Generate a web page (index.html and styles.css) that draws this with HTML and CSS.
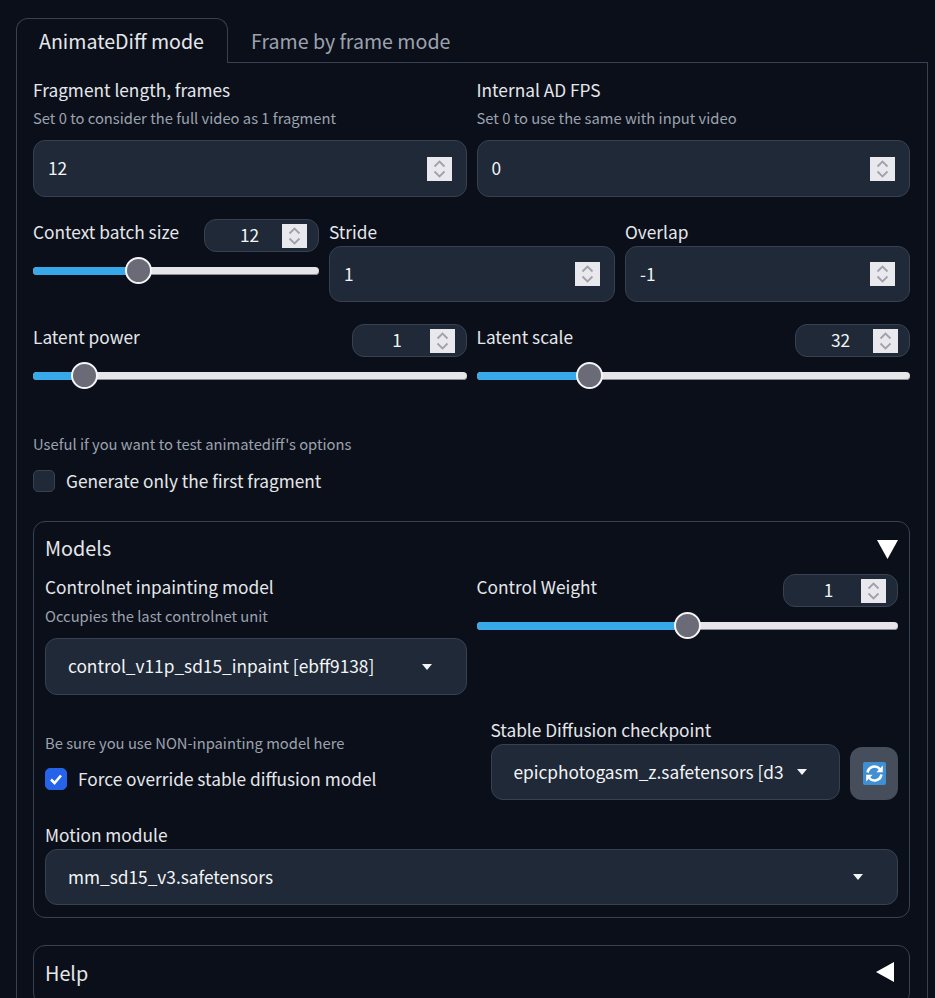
FILE: index.html
```html
<!DOCTYPE html>
<html>

<head>
    <meta charset="UTF-8">
    <meta name="viewport" content="width=device-width, initial-scale=1.0">
    <title>AnimateDiff</title>
    <link rel="stylesheet" href="styles.css">
</head>

<body>
    <svg class="defs">
        <symbol id="spin" viewBox="0 0 25 24">
            <path d="M7.5 9.5 12.5 4.5 17.5 9.5M7.5 14.5 12.5 19.5 17.5 14.5" fill="none" stroke="#a3a0ad" stroke-width="1.8"/>
        </symbol>
    </svg>

    <div class="tabs">
        <div class="tab active">AnimateDiff mode</div>
        <div class="tab">Frame by frame mode</div>
    </div>

    <div class="panel">
        <div class="row two first-row">
            <div>
                <div class="label">Fragment length, frames</div>
                <div class="info">Set 0 to consider the full video as 1 fragment</div>
                <div class="input"><span class="val">12</span><span class="spin"><svg><use href="#spin"/></svg></span></div>
            </div>
            <div>
                <div class="label">Internal AD FPS</div>
                <div class="info">Set 0 to use the same with input video</div>
                <div class="input"><span class="val">0</span><span class="spin"><svg><use href="#spin"/></svg></span></div>
            </div>
        </div>

        <div class="row three">
            <div>
                <div class="slider-head">
                    <div class="label">Context batch size</div>
                    <div class="mini"><span class="val">12</span><span class="spin"><svg><use href="#spin"/></svg></span></div>
                </div>
                <div class="slider"><div class="fill" style="width: 36.9%"></div><div class="thumb" style="left: 36.9%"></div></div>
            </div>
            <div>
                <div class="label short">Stride</div>
                <div class="input"><span class="val">1</span><span class="spin"><svg><use href="#spin"/></svg></span></div>
            </div>
            <div>
                <div class="label short">Overlap</div>
                <div class="input"><span class="val">-1</span><span class="spin"><svg><use href="#spin"/></svg></span></div>
            </div>
        </div>

        <div class="row two latent">
            <div>
                <div class="slider-head">
                    <div class="label">Latent power</div>
                    <div class="mini"><span class="val">1</span><span class="spin"><svg><use href="#spin"/></svg></span></div>
                </div>
                <div class="slider"><div class="fill" style="width: 11.8%"></div><div class="thumb" style="left: 11.8%"></div></div>
            </div>
            <div>
                <div class="slider-head">
                    <div class="label">Latent scale</div>
                    <div class="mini"><span class="val">32</span><span class="spin"><svg><use href="#spin"/></svg></span></div>
                </div>
                <div class="slider"><div class="fill" style="width: 26%"></div><div class="thumb" style="left: 26%"></div></div>
            </div>
        </div>

        <div class="info first-only">Useful if you want to test animatediff's options</div>
        <div class="check-row">
            <span class="check"></span>
            <span class="check-text">Generate only the first fragment</span>
        </div>

        <div class="accordion models">
            <div class="acc-head">
                <span class="acc-title">Models</span>
                <svg class="tri-down" width="21" height="19" viewBox="0 0 21 19"><polygon points="0,0 21,0 10.5,19" fill="#fff"/></svg>
            </div>

            <div class="row two cn-row">
                <div>
                    <div class="label">Controlnet inpainting model</div>
                    <div class="info">Occupies the last controlnet unit</div>
                    <div class="select tall">
                        <span class="sel-text">control_v11p_sd15_inpaint [ebff9138]</span>
                        <span class="caret"></span>
                    </div>
                </div>
                <div>
                    <div class="slider-head">
                        <div class="label">Control Weight</div>
                        <div class="mini"><span class="val">1</span><span class="spin"><svg><use href="#spin"/></svg></span></div>
                    </div>
                    <div class="slider"><div class="fill" style="width: 50%"></div><div class="thumb" style="left: 50%"></div></div>
                </div>
            </div>

            <div class="row two override">
                <div class="override-left">
                    <div class="info">Be sure you use NON-inpainting model here</div>
                    <div class="check-row tight">
                        <span class="check on">
                            <svg width="16" height="16" viewBox="0 0 16 16"><path d="M3 8.5 6.5 12 13 4.5" fill="none" stroke="#fff" stroke-width="2.6"/></svg>
                        </span>
                        <span class="check-text">Force override stable diffusion model</span>
                    </div>
                </div>
                <div class="ckpt">
                    <div class="ckpt-main">
                        <div class="label ckpt-label">Stable Diffusion checkpoint</div>
                        <div class="select narrow">
                            <span class="sel-text">epicphotogasm_z.safetensors [d3</span>
                            <span class="caret"></span>
                        </div>
                    </div>
                    <div class="refresh">
                        <svg width="23" height="23" viewBox="0 0 23 23">
                            <rect width="23" height="23" rx="2" fill="#3f8fd2"/>
                            <path d="M4.6 10.5A7 7 0 0 1 17 7.2" fill="none" stroke="#fff" stroke-width="2.6"/>
                            <polygon points="19.8,3.6 19.8,10.2 13.4,10.2" fill="#fff"/>
                            <path d="M18.4 12.5A7 7 0 0 1 6 15.8" fill="none" stroke="#fff" stroke-width="2.6"/>
                            <polygon points="3.2,19.4 3.2,12.8 9.6,12.8" fill="#fff"/>
                        </svg>
                    </div>
                </div>
            </div>

            <div class="label motion">Motion module</div>
            <div class="select">
                <span class="sel-text">mm_sd15_v3.safetensors</span>
                <span class="caret"></span>
            </div>
        </div>

        <div class="accordion help">
            <div class="acc-head">
                <span class="acc-title">Help</span>
                <svg class="tri-left" width="18" height="20" viewBox="0 0 18 20"><polygon points="18,0 18,20 0,10" fill="#fff"/></svg>
            </div>
        </div>
    </div>
</body>

</html>
```

FILE: styles.css
```css
* {
    box-sizing: border-box;
    margin: 0;
    padding: 0;
}
html, body {
    height: 998px;
    overflow: hidden;
}
body {
    background: #0b0f19;
    color: #e5e7eb;
    font-family: "Noto Sans CJK SC", "Noto Sans", sans-serif;
    font-size: 17.3px;
    padding: 18px 7px 0 16px;
}
.defs {
    display: none;
}

.tabs {
    display: flex;
    height: 45px;
    border-bottom: 1px solid #374151;
}
.tab {
    padding: 0 23px;
    font-size: 19.6px;
    line-height: 46px;
    white-space: nowrap;
    color: #9ca3af;
}
.tab.active {
    width: 212px;
    height: 45px;
    color: #e5e7eb;
    background: #0b0f19;
    border: 1px solid #374151;
    border-bottom: 0;
    border-radius: 12px 12px 0 0;
    line-height: 44px;
    padding: 0 22px;
}

.panel {
    height: 960px;
    padding: 14px 17px 0 16px;
    border-left: 1px solid #374151;
    border-right: 1px solid #374151;
}

.row {
    display: grid;
    gap: 10px;
}
.two {
    grid-template-columns: minmax(0, 1fr) minmax(0, 1fr);
}
.three {
    grid-template-columns: 286px 286px minmax(0, 1fr);
    margin-top: 22px;
}
.latent {
    margin-top: 22px;
}

.label {
    font-size: 17.3px;
    line-height: 26px;
    color: #e5e7eb;
}
.label.short {
    height: 27px;
}
.info {
    font-size: 14.75px;
    line-height: 20px;
    margin-top: 5px;
    margin-bottom: 12px;
    color: #9ca3af;
}

.input {
    display: flex;
    align-items: center;
    justify-content: space-between;
    height: 56px;
    padding: 0 14px;
    background: #1f2937;
    border: 1px solid #374151;
    border-radius: 12px;
    color: #f3f4f6;
}
.first-row .input {
    height: 57px;
}
.val {
    margin-bottom: 2px;
}
.spin {
    display: block;
    flex: none;
    width: 25px;
    height: 24px;
    background: #e9e8ed;
}
.spin svg {
    display: block;
    width: 25px;
    height: 24px;
}

.slider-head {
    display: flex;
    justify-content: space-between;
    height: 34px;
}
.mini {
    display: flex;
    align-items: center;
    width: 115px;
    height: 33px;
    padding-right: 11px;
    background: #1f2937;
    border: 1px solid #374151;
    border-radius: 12px;
    color: #f3f4f6;
}
.mini .val {
    flex: 1;
    padding-left: 12px;
    text-align: center;
}

.slider {
    position: relative;
    height: 8px;
    margin-top: 14px;
    background: #e6e5ea;
    border-radius: 4px;
    box-shadow: inset 0 -1px 0 #8d8d96;
}
.fill {
    height: 8px;
    background: #38a9e8;
    border-radius: 4px 0 0 4px;
}
.thumb {
    position: absolute;
    top: -10px;
    width: 27px;
    height: 27px;
    margin-left: -13.5px;
    background: #6b6b78;
    border: 2px solid #f4f4f6;
    border-radius: 50%;
}

.first-only {
    margin-top: 54px;
    margin-bottom: 0;
}
.check-row {
    display: flex;
    align-items: center;
    gap: 11px;
    margin-top: 15px;
}
.check-row.tight {
    margin-top: 14px;
}
.check {
    display: flex;
    align-items: center;
    justify-content: center;
    width: 22px;
    height: 22px;
    background: #1f2937;
    border: 1px solid #374151;
    border-radius: 5px;
}
.check.on {
    background: #2563eb;
    border-color: #2563eb;
}
.check-text {
    line-height: 24px;
    color: #e5e7eb;
}

.accordion {
    padding: 0 11px;
    border: 1px solid #374151;
    border-radius: 12px;
}
.models {
    height: 397px;
    margin-top: 28px;
}
.help {
    margin-top: 27px;
    height: 60px;
}
.acc-head {
    display: flex;
    align-items: center;
    justify-content: space-between;
    height: 52px;
}
.acc-title {
    font-size: 19.8px;
    line-height: 28px;
}
.help .acc-title {
    margin-top: 2px;
}
.tri-down {
    margin-top: 3px;
}
.tri-left {
    margin-right: 4px;
}

.select {
    display: flex;
    align-items: center;
    justify-content: space-between;
    height: 56px;
    padding: 0 34px 0 22px;
    background: #1f2937;
    border: 1px solid #374151;
    border-radius: 12px;
    color: #f3f4f6;
}
.select.tall {
    height: 57px;
}
.select.narrow {
    padding-right: 32px;
}
.sel-text {
    margin-bottom: 2px;
    white-space: nowrap;
    overflow: hidden;
}
.caret {
    flex: none;
    width: 0;
    height: 0;
    margin-left: 12px;
    border-left: 5.5px solid transparent;
    border-right: 5.5px solid transparent;
    border-top: 6px solid #f3f4f6;
}

.cn-row .info {
    margin-top: 6px;
}
.override {
    margin-top: 24px;
}
.override-left .info {
    margin-top: 14px;
    margin-bottom: 0;
}
.ckpt {
    display: flex;
    align-items: flex-end;
    gap: 10px;
    margin-top: -1px;
    padding-left: 14px;
}
.ckpt-main {
    flex: 1;
    min-width: 0;
}
.ckpt-label {
    height: 26px;
    line-height: 24px;
}
.refresh {
    display: flex;
    align-items: center;
    justify-content: center;
    flex: none;
    width: 48px;
    height: 53px;
    background: #474e5b;
    border-radius: 12px;
}
.motion {
    margin-top: 23px;
    height: 26px;
    line-height: 24px;
}
```
